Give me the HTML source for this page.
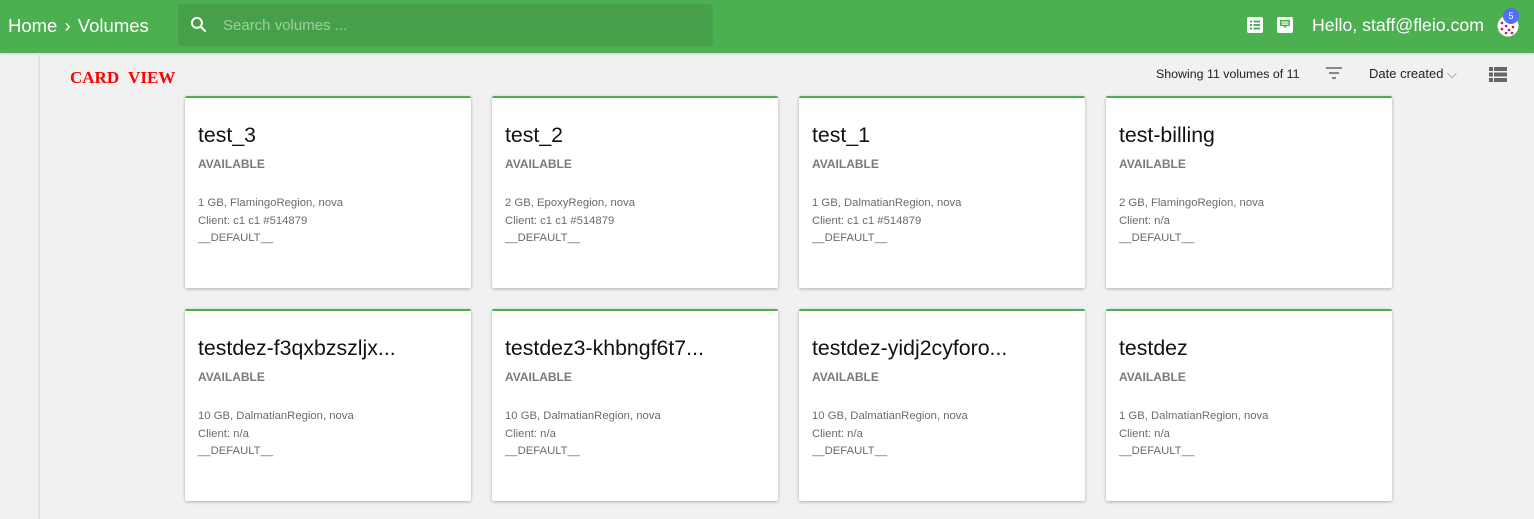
<!DOCTYPE html>
<html><head><meta charset="utf-8"><style>
*{box-sizing:border-box;margin:0;padding:0}
body{width:1534px;height:519px;overflow:hidden;background:#f1f1f1;font-family:"Liberation Sans",sans-serif;position:relative}
.top{position:absolute;left:0;top:0;width:1534px;height:53px;background:#4caf50;box-shadow:0 1px 2px rgba(0,0,0,.15)}
.crumb{position:absolute;left:8px;top:15px;color:#fff;font-size:18.5px;word-spacing:2px}
.search{position:absolute;left:178px;top:4px;width:535px;height:42px;background:#45a049;border-radius:3px}
.search span{position:absolute;left:45px;top:13px;color:#9ccf9e;font-size:15px}
.side{position:absolute;left:38px;top:53px;width:2px;height:466px;background:#e2e2e2}
.cv{position:absolute;left:70px;top:68px;color:#f00;font-family:"Liberation Serif",serif;font-weight:bold;font-size:17px;word-spacing:5px}
.tb{position:absolute;top:66px;font-size:13px;color:#222}
.card{position:absolute;width:286px;height:192px;background:#fff;border-top:2px solid #4caf50;border-radius:2px;box-shadow:0 1px 3px rgba(0,0,0,.28)}
.card h2{position:absolute;left:13px;top:25px;font-weight:normal;font-size:21.3px;color:#111}
.card .st{position:absolute;left:13px;top:59px;font-size:12px;font-weight:bold;color:#7a7a7a}
.card .d{position:absolute;left:13px;top:97px;font-size:11.3px;line-height:17.5px;color:#6b6b6b}
</style></head><body>
<div class="top">
<div class="crumb">Home <b style="font-weight:normal">›</b> Volumes</div>
<div class="search"><svg style="position:absolute;left:11px;top:11px" width="20" height="20" viewBox="0 0 24 24"><circle cx="9.5" cy="9.5" r="6" stroke="#fff" stroke-width="2.4" fill="none"/><path d="M14 14l6 6" stroke="#fff" stroke-width="2.6"/></svg><span>Search volumes ...</span></div>
<svg style="position:absolute;left:1246px;top:16px" width="18" height="18" viewBox="0 0 18 18"><rect x="1" y="1" width="16" height="16" rx="2" fill="#fff"/><g fill="#4caf50"><rect x="4" y="4.5" width="2" height="2"/><rect x="7.5" y="4.5" width="6.5" height="2"/><rect x="4" y="8" width="2" height="2"/><rect x="7.5" y="8" width="6.5" height="2"/><rect x="4" y="11.5" width="2" height="2"/><rect x="7.5" y="11.5" width="6.5" height="2"/></g></svg>
<svg style="position:absolute;left:1276px;top:16px" width="18" height="18" viewBox="0 0 18 18"><rect x="1" y="1" width="16" height="16" rx="2" fill="#fff"/><rect x="4" y="4" width="10" height="6" fill="#4caf50"/><rect x="5.5" y="5.5" width="7" height="1.2" fill="#fff"/><rect x="5.5" y="7.5" width="7" height="1.2" fill="#fff"/><path d="M7 10h4l-2 2z" fill="#4caf50"/></svg>
<div style="position:absolute;left:1312px;top:15px;color:#fff;font-size:17.7px">Hello, staff@fleio.com</div>
<svg style="position:absolute;left:1497px;top:15px" width="22" height="22" viewBox="0 0 22 22"><circle cx="11" cy="11" r="10.5" fill="#fff"/><g fill="#c2185b"><circle cx="5" cy="8" r="1.3"/><circle cx="9" cy="11" r="1.3"/><circle cx="5" cy="14" r="1.3"/><circle cx="12" cy="15" r="1.3"/><circle cx="16" cy="12" r="1.3"/><circle cx="9" cy="18" r="1.3"/><circle cx="15" cy="18" r="1.3"/></g></svg>
<div style="position:absolute;left:1503px;top:8px;width:16px;height:16px;border-radius:50%;background:#536dfe;color:#fff;font-size:9px;text-align:center;line-height:16px">5</div>
</div>
<div class="side"></div>
<div class="cv">CARD VIEW</div>
<div class="tb" style="left:1156px;font-size:12.4px;top:67px">Showing 11 volumes of 11</div>
<svg style="position:absolute;left:1326px;top:67px" width="16" height="12" viewBox="0 0 16 12"><path d="M0 1h16M3 6h10M6 11h4" stroke="#666" stroke-width="1.6"/></svg>
<div class="tb" style="left:1369px">Date created <span style="color:#777">⌵</span></div>
<svg style="position:absolute;left:1489px;top:67px" width="18" height="15" viewBox="0 0 18 15"><g fill="#666"><rect x="0" y="0" width="4" height="4"/><rect x="5" y="0" width="13" height="4"/><rect x="0" y="5.5" width="4" height="4"/><rect x="5" y="5.5" width="13" height="4"/><rect x="0" y="11" width="4" height="4"/><rect x="5" y="11" width="13" height="4"/></g></svg>

<div class="card" style="left:185px;top:96px"><h2>test_3</h2><div class="st">AVAILABLE</div><div class="d">1 GB, FlamingoRegion, nova<br>Client: c1 c1 #514879<br>__DEFAULT__</div></div>
<div class="card" style="left:492px;top:96px"><h2>test_2</h2><div class="st">AVAILABLE</div><div class="d">2 GB, EpoxyRegion, nova<br>Client: c1 c1 #514879<br>__DEFAULT__</div></div>
<div class="card" style="left:799px;top:96px"><h2>test_1</h2><div class="st">AVAILABLE</div><div class="d">1 GB, DalmatianRegion, nova<br>Client: c1 c1 #514879<br>__DEFAULT__</div></div>
<div class="card" style="left:1106px;top:96px"><h2>test-billing</h2><div class="st">AVAILABLE</div><div class="d">2 GB, FlamingoRegion, nova<br>Client: n/a<br>__DEFAULT__</div></div>
<div class="card" style="left:185px;top:309px"><h2>testdez-f3qxbzszljx...</h2><div class="st">AVAILABLE</div><div class="d">10 GB, DalmatianRegion, nova<br>Client: n/a<br>__DEFAULT__</div></div>
<div class="card" style="left:492px;top:309px"><h2>testdez3-khbngf6t7...</h2><div class="st">AVAILABLE</div><div class="d">10 GB, DalmatianRegion, nova<br>Client: n/a<br>__DEFAULT__</div></div>
<div class="card" style="left:799px;top:309px"><h2>testdez-yidj2cyforo...</h2><div class="st">AVAILABLE</div><div class="d">10 GB, DalmatianRegion, nova<br>Client: n/a<br>__DEFAULT__</div></div>
<div class="card" style="left:1106px;top:309px"><h2>testdez</h2><div class="st">AVAILABLE</div><div class="d">1 GB, DalmatianRegion, nova<br>Client: n/a<br>__DEFAULT__</div></div>
</body></html>
